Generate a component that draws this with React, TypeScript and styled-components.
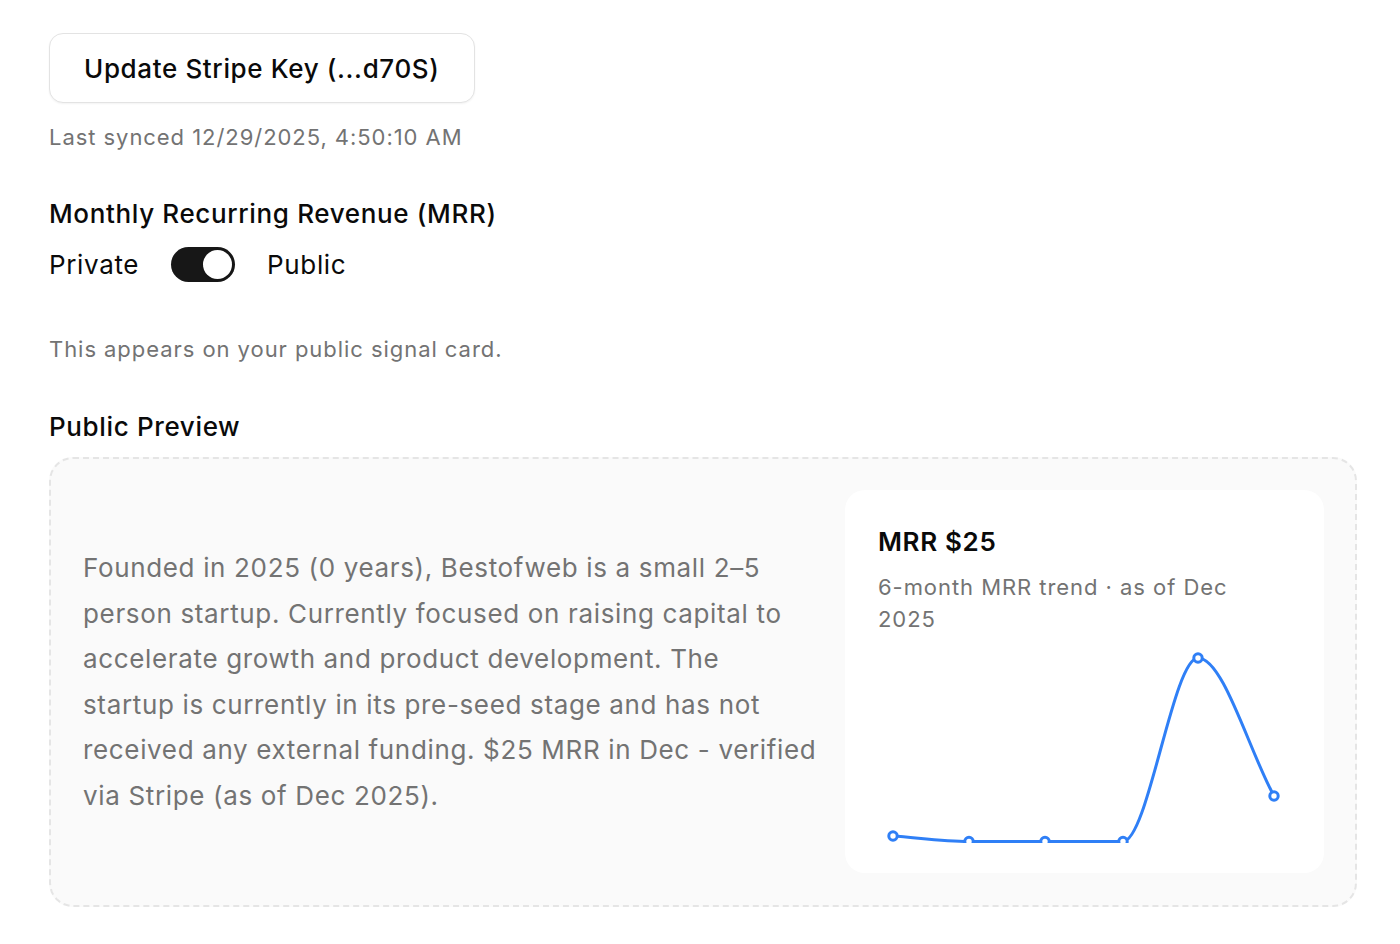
import React from 'react';
import styled, { createGlobalStyle } from 'styled-components';

const GlobalStyle = createGlobalStyle`
  html, body {
    margin: 0;
    padding: 0;
    background: #ffffff;
  }
  body {
    font-family: Inter, "Noto Sans", "Liberation Sans", sans-serif;
    color: #0a0a0a;
    letter-spacing: 0.04em;
    -webkit-font-smoothing: antialiased;
  }
  * {
    box-sizing: border-box;
  }
`;

const Page = styled.div`
  padding: 33px 43px 40px 49px;
  width: 1400px;
`;

const KeyButton = styled.button`
  display: block;
  height: 70px;
  padding: 0 34px;
  font-family: inherit;
  letter-spacing: inherit;
  font-size: 26px;
  font-weight: 500;
  color: #0a0a0a;
  background: #ffffff;
  border: 1.5px solid #e3e3e3;
  border-radius: 14px;
  box-shadow: 0 1px 2px rgba(0, 0, 0, 0.05);
  cursor: pointer;
`;

const Muted = styled.p<{ $top: number }>`
  margin: ${({ $top }) => $top}px 0 0;
  font-size: 22px;
  line-height: 32px;
  letter-spacing: 0.043em;
  color: #737373;
`;

const Heading = styled.h3<{ $top: number }>`
  margin: ${({ $top }) => $top}px 0 0;
  font-size: 26px;
  line-height: 36px;
  font-weight: 500;
`;

const ToggleRow = styled.div`
  display: flex;
  align-items: center;
  gap: 32px;
  margin-top: 14px;
  height: 36px;
  font-size: 26px;
`;

const Track = styled.span<{ $on: boolean }>`
  position: relative;
  display: inline-block;
  width: 64px;
  height: 35px;
  border-radius: 18px;
  background: ${({ $on }) => ($on ? '#171717' : '#e5e5e5')};
`;

const Knob = styled.span<{ $on: boolean }>`
  position: absolute;
  top: 3px;
  left: ${({ $on }) => ($on ? '32px' : '3px')};
  width: 29px;
  height: 29px;
  border-radius: 50%;
  background: #ffffff;
  box-shadow: 0 1px 3px rgba(0, 0, 0, 0.2);
`;

const PreviewBox = styled.div`
  margin-top: 12px;
  display: grid;
  grid-template-columns: minmax(0, 1fr) 479px;
  align-items: center;
  gap: 33px;
  padding: 31px 31px 32px 32px;
  border: 2px dashed #e5e5e5;
  border-radius: 24px;
  background: #fafafa;
`;

const Summary = styled.p`
  margin: 0;
  font-size: 26px;
  line-height: 45.5px;
  letter-spacing: 0.025em;
  white-space: pre;
  color: #737373;
`;

const Card = styled.div`
  background: #ffffff;
  border-radius: 20px;
  padding: 34px 33px 30px;
`;

const CardTitle = styled.div`
  font-size: 26px;
  line-height: 36px;
  font-weight: 600;
`;

const CardSub = styled.div`
  margin-top: 11px;
  max-width: 370px;
  font-size: 22px;
  line-height: 32px;
  letter-spacing: 0.043em;
  color: #737373;
`;

const Chart = styled.svg`
  display: block;
  margin-top: 10px;
  overflow: hidden;
`;

type Pt = [number, number];

// monotone cubic interpolation, like recharts "monotone"
function monotonePath(pts: Pt[]): string {
  const n = pts.length;
  const dx: number[] = [];
  const m: number[] = [];
  for (let i = 0; i < n - 1; i++) {
    dx.push(pts[i + 1][0] - pts[i][0]);
    m.push((pts[i + 1][1] - pts[i][1]) / dx[i]);
  }
  const t: number[] = [m[0]];
  for (let i = 1; i < n - 1; i++) {
    if (m[i - 1] * m[i] <= 0) t.push(0);
    else {
      const w = dx[i - 1] + dx[i];
      t.push((3 * w) / ((2 * dx[i] + dx[i - 1]) / m[i - 1] + (dx[i] + 2 * dx[i - 1]) / m[i]));
    }
  }
  t.push(m[n - 2]);
  let d = `M${pts[0][0]},${pts[0][1]}`;
  for (let i = 0; i < n - 1; i++) {
    const h = dx[i] / 3;
    d += ` C${pts[i][0] + h},${pts[i][1] + t[i] * h} ${pts[i + 1][0] - h},${pts[i + 1][1] - t[i + 1] * h} ${pts[i + 1][0]},${pts[i + 1][1]}`;
  }
  return d;
}

const points: Pt[] = [
  [15, 191],
  [91, 196.5],
  [167, 196.5],
  [245, 196.5],
  [320, 13],
  [396, 151],
];

const summary = [
  'Founded in 2025 (0 years), Bestofweb is a small 2–5',
  'person startup. Currently focused on raising capital to',
  'accelerate growth and product development. The',
  'startup is currently in its pre-seed stage and has not',
  'received any external funding. $25 MRR in Dec - verified',
  'via Stripe (as of Dec 2025).',
].join('\n');

const Sparkline = () => (
  <Chart width={413} height={198} viewBox="0 0 413 198">
    <path d={monotonePath(points)} fill="none" stroke="#2f7ff6" strokeWidth={3} />
    {points.map(([x, y]) => (
      <circle key={x} cx={x} cy={y} r={4.2} fill="#ffffff" stroke="#2f7ff6" strokeWidth={3} />
    ))}
  </Chart>
);

export default function App() {
  return (
    <>
      <GlobalStyle />
      <Page>
        <KeyButton>Update Stripe Key (...d70S)</KeyButton>
        <Muted $top={18}>Last synced 12/29/2025, 4:50:10 AM</Muted>

        <Heading $top={43}>Monthly Recurring Revenue (MRR)</Heading>
        <ToggleRow>
          <span>Private</span>
          <Track $on>
            <Knob $on />
          </Track>
          <span>Public</span>
        </ToggleRow>
        <Muted $top={51}>This appears on your public signal card.</Muted>

        <Heading $top={44}>Public Preview</Heading>
        <PreviewBox>
          <Summary>{summary}</Summary>
          <Card>
            <CardTitle>MRR $25</CardTitle>
            <CardSub>6-month MRR trend · as of Dec 2025</CardSub>
            <Sparkline />
          </Card>
        </PreviewBox>
      </Page>
    </>
  );
}
